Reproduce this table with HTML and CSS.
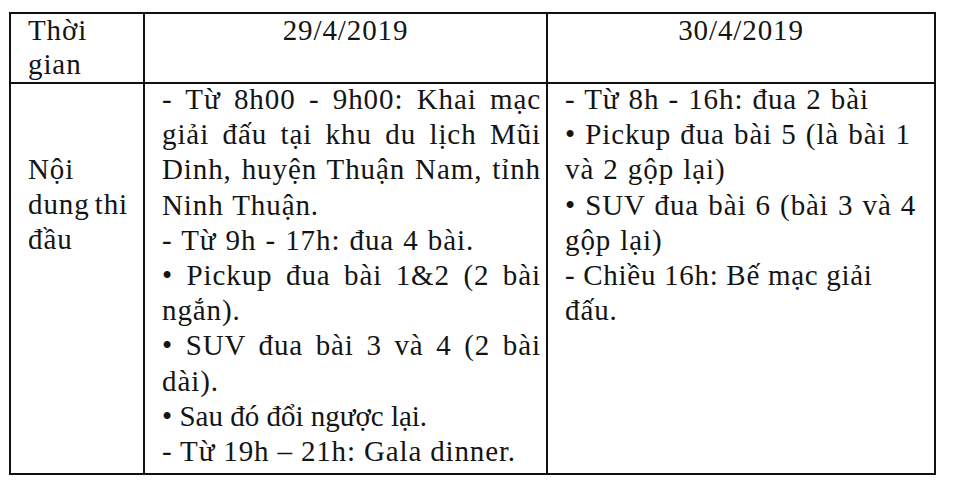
FILE: index.html
```html
<!DOCTYPE html>
<html lang="vi">
<head>
<meta charset="utf-8">
<title>Lịch thi đấu</title>
<link rel="stylesheet" href="styles.css">
</head>
<body>
<table class="sched">
  <colgroup>
    <col class="c1">
    <col class="c2">
    <col class="c3">
  </colgroup>
  <tr class="head">
    <td><div class="cell">Thời<br>gian</div></td>
    <td class="center"><div class="cell">29/4/2019</div></td>
    <td class="center"><div class="cell">30/4/2019</div></td>
  </tr>
  <tr class="body">
    <td><div class="cell label">Nội<br><span class="tight">dung thi</span><br>đầu</div></td>
    <td>
      <div class="cell">
        <div class="jl">- Từ 8h00 - 9h00: Khai mạc</div>
        <div class="jl">giải đấu tại khu du lịch Mũi</div>
        <div class="jl">Dinh, huyện Thuận Nam, tỉnh</div>
        <div>Ninh Thuận.</div>
        <div>- Từ 9h - 17h: đua 4 bài.</div>
        <div class="jl">• Pickup đua bài 1&amp;2 (2 bài</div>
        <div>ngắn).</div>
        <div class="jl">• SUV đua bài 3 và 4 (2 bài</div>
        <div>dài).</div>
        <div class="snug">• Sau đó đổi ngược lại.</div>
        <div class="semi">- Từ 19h – 21h: Gala dinner.</div>
      </div>
    </td>
    <td>
      <div class="cell">
        <div>- Từ 8h - 16h: đua 2 bài</div>
        <div>• Pickup đua bài 5 (là bài 1</div>
        <div>và 2 gộp lại)</div>
        <div>• SUV đua bài 6 (bài 3 và 4</div>
        <div>gộp lại)</div>
        <div class="semi2">- Chiều 16h: Bế mạc giải</div>
        <div>đấu.</div>
      </div>
    </td>
  </tr>
</table>
</body>
</html>
```

FILE: styles.css
```css
html, body {
  margin: 0;
  padding: 0;
  background: #ffffff;
}

.sched {
  border-collapse: collapse;
  table-layout: fixed;
  width: 925px;
  margin: 12px 0 0 9px;
  font-family: "Liberation Serif", "Times New Roman", serif;
  font-size: 29px;
  line-height: 35.2px;
  letter-spacing: 0.9px;
  word-spacing: 1px;
  color: #141414;
}

.c1 { width: 134px; }
.c2 { width: 403px; }
.c3 { width: 388px; }

.sched td {
  border: 2px solid #111111;
  padding: 0 5px 0 17px;
  vertical-align: top;
}

.head { height: 70px; }
.body { height: 391px; }

.head .cell {
  line-height: 34px;
  margin-top: -1px;
}
.body .cell { margin-top: -2px; }

.center { text-align: center; }
.sched td.center { padding: 0; }

.label { padding-top: 70px; }
.tight { word-spacing: -3px; }

.snug { letter-spacing: 0; word-spacing: 0; }
.semi { letter-spacing: 0.85px; word-spacing: 0; }
.semi2 { letter-spacing: 0.7px; word-spacing: 0; }

.jl {
  text-align: justify;
  text-align-last: justify;
}
```
